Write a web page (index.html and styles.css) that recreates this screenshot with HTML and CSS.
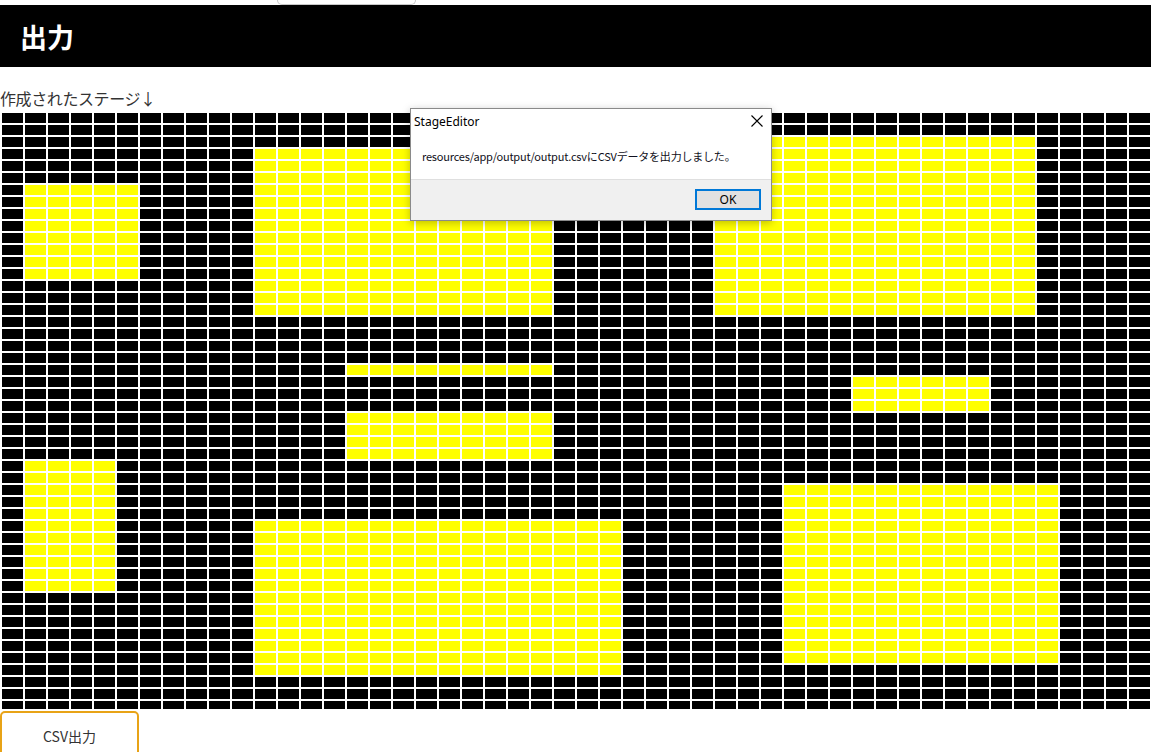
FILE: index.html
```html
<!DOCTYPE html>
<html lang="ja">
<head>
<meta charset="utf-8">
<title>StageEditor</title>
<link rel="stylesheet" href="styles.css">
</head>
<body>
<div class="page">
  <div class="topstrip"><div class="tab"></div></div>
  <header class="header"><h1 class="title">出力</h1></header>
  <p class="caption">作成されたステージ↓</p>
  <div class="stage-wrap"><div class="stage" id="stage"></div></div>
  <button class="csv-btn">CSV出力</button>
</div>

<div class="dialog">
  <div class="dialog-title">
    <span class="dialog-name">StageEditor</span>
    <svg class="dialog-close" width="12" height="12" viewBox="0 0 12 12"><path d="M0.5 0.5 L11.5 11.5 M11.5 0.5 L0.5 11.5" stroke="#000" stroke-width="1.1" fill="none"/></svg>
  </div>
  <div class="dialog-body">resources/app/output/output.csvにCSVデータを出力しました。</div>
  <div class="dialog-foot"><button class="ok-btn">OK</button></div>
</div>
<script src="script.js"></script>
</body>
</html>
```

FILE: styles.css
```css
html, body {
  margin: 0;
  padding: 0;
  background: #fff;
}
body {
  font-family: "Noto Sans CJK JP", "Noto Sans", sans-serif;
  color: #333;
}
.page {
  width: 1151px;
}
.topstrip {
  height: 5px;
  display: flex;
}
.tab {
  margin-left: 277px;
  width: 137px;
  height: 4px;
  border: 1px solid #c8c8c8;
  border-top: none;
  border-radius: 0 0 6px 6px;
}
.header {
  background: #000;
  height: 62px;
  display: flex;
  align-items: center;
  padding-left: 20px;
}
.title {
  margin: 0;
  color: #fff;
  font-size: 27px;
  font-weight: 700;
  line-height: 1;
}
.caption {
  margin: 19px 0 0;
  font-size: 16px;
  line-height: 24px;
  height: 24px;
  color: #333;
  font-weight: 400;
  letter-spacing: -0.4px;
}
.stage-wrap {
  margin-top: 3px;
  height: 596px;
  overflow: hidden;
}
.stage {
  display: grid;
  grid-template-columns: repeat(50, 21px);
  grid-auto-rows: 10px;
  gap: 2px;
  padding-left: 2px;
}
.cell {
  background: #000;
}
.cell.on {
  background: #ffff00;
}
.csv-btn {
  display: block;
  margin-top: 2px;
  width: 139px;
  height: 50px;
  background: #fff;
  border: 2px solid #e8a317;
  border-radius: 5px;
  font-family: "Noto Sans CJK JP", "Noto Sans", sans-serif;
  font-size: 14px;
  font-weight: 400;
  color: #333;
  padding: 0;
}
.dialog {
  position: absolute;
  left: 410px;
  top: 108px;
  width: 360px;
  height: 111px;
  background: #fff;
  border: 1px solid #8a8a8a;
  box-shadow: 0 2px 8px rgba(0,0,0,0.25);
  display: flex;
  flex-direction: column;
  font-family: "Noto Sans", "Noto Sans CJK JP", sans-serif;
  color: #000;
}
.dialog-title {
  height: 24px;
  display: flex;
  align-items: center;
  justify-content: space-between;
  padding: 0 8px 0 3px;
}
.dialog-name {
  font-size: 12px;
}
.dialog-close {
  display: block;
}
.dialog-body {
  height: 46px;
  display: flex;
  align-items: center;
  padding-left: 11px;
  font-size: 11px;
  font-family: "Noto Sans CJK JP", sans-serif;
  letter-spacing: -0.2px;
  color: #101020;
}
.dialog-foot {
  flex: 1;
  background: #f0f0f0;
  border-top: 1px solid #dfdfdf;
  display: flex;
  align-items: center;
  justify-content: flex-end;
  padding-right: 10px;
  padding-bottom: 2px;
}
.ok-btn {
  width: 66px;
  height: 21px;
  background: #e1e1e1;
  border: 2px solid #0078d7;
  font-family: "Noto Sans", sans-serif;
  font-size: 12px;
  color: #000;
  padding: 0;
}
```

FILE: script.js
```js
(function () {
  var COLS = 50, ROWS = 50;
  // [colStart, colEnd, rowStart, rowEnd] inclusive
  var rects = [
    [1, 5, 6, 13],
    [11, 23, 3, 16],
    [31, 44, 2, 16],
    [15, 23, 21, 21],
    [15, 23, 25, 28],
    [37, 42, 22, 24],
    [1, 4, 29, 39],
    [11, 26, 34, 46],
    [34, 45, 31, 45]
  ];
  function isOn(c, r) {
    for (var i = 0; i < rects.length; i++) {
      var q = rects[i];
      if (c >= q[0] && c <= q[1] && r >= q[2] && r <= q[3]) return true;
    }
    return false;
  }
  var stage = document.getElementById('stage');
  var frag = document.createDocumentFragment();
  for (var r = 0; r < ROWS; r++) {
    for (var c = 0; c < COLS; c++) {
      var d = document.createElement('div');
      d.className = isOn(c, r) ? 'cell on' : 'cell';
      frag.appendChild(d);
    }
  }
  stage.appendChild(frag);
})();
```
